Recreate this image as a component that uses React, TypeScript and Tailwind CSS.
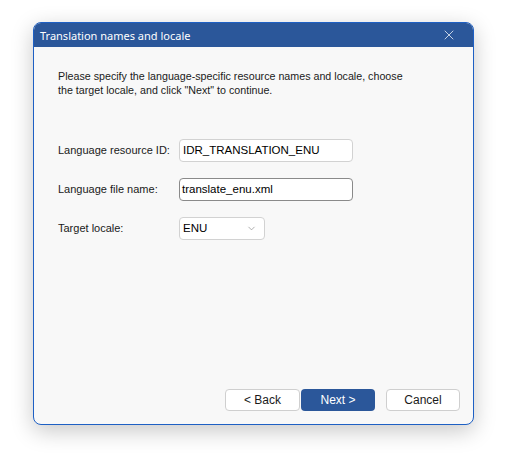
import { ChevronDown, X } from 'lucide-react';

const body = "font-['Liberation_Sans',Arial,sans-serif]";

function Field({ label, value, focused }: { label: string; value: string; focused?: boolean }) {
  return (
    <div className="flex items-center">
      <span className="w-[121px] shrink-0 whitespace-nowrap text-[11px] text-[#1a1a1a]">{label}</span>
      <div
        className={`flex h-[23px] w-[174px] items-center rounded-[4px] border bg-white text-[11.5px] text-black ${
          focused ? 'border-[#8a8a8a] pl-[2px]' : 'border-[#d2d2d2] pl-[3px]'
        }`}
      >
        {value}
      </div>
    </div>
  );
}

export default function App() {
  return (
    <div className={`min-h-screen bg-white pl-[33px] pt-[22px] ${body}`}>
      <div className="flex h-[403px] w-[441px] flex-col overflow-hidden rounded-[8px] border border-[#1e60c4] bg-[#f8f8f8] shadow-[0_6px_22px_rgba(0,0,0,0.22)]">
        {/* title bar */}
        <div className="flex h-[24px] items-center justify-between bg-[#2b579a] pl-[6px] pr-[16px] text-white">
          <span className="font-['Noto_Sans','Open_Sans',sans-serif] text-[11px] leading-none">
            Translation names and locale
          </span>
          <X className="h-[16px] w-[16px]" strokeWidth={1.1} />
        </div>

        <div className="flex flex-1 flex-col pl-[24px] pr-[13px] pt-[22px] pb-[13px]">
          <p className="text-[10.7px] leading-[14px] text-[#1a1a1a]">
            Please specify the language-specific resource names and locale, choose
            <br />
            the target locale, and click &quot;Next&quot; to continue.
          </p>

          <div className="mt-[42px] flex flex-col gap-[16px]">
            <Field label="Language resource ID:" value="IDR_TRANSLATION_ENU" />
            <Field label="Language file name:" value="translate_enu.xml" focused />
            <div className="flex items-center">
              <span className="w-[121px] shrink-0 whitespace-nowrap text-[11px] text-[#1a1a1a]">Target locale:</span>
              <div className="flex h-[23px] w-[86px] items-center justify-between rounded-[4px] border border-[#d2d2d2] bg-white pl-[3px] pr-[7px] text-[11.5px] text-black">
                ENU
                <ChevronDown className="h-[11px] w-[11px] text-[#8a8a8a]" strokeWidth={1.5} />
              </div>
            </div>
          </div>

          <div className="flex-1" />

          <div className="flex justify-end">
            <button className="h-[22px] w-[75px] rounded-[4px] border border-[#cfcfcf] bg-white text-[12px] text-[#1a1a1a]">
              &lt; Back
            </button>
            <button className="ml-[1px] h-[22px] w-[74px] rounded-[4px] bg-[#2b579a] text-[12px] text-white">
              Next &gt;
            </button>
            <button className="ml-[11px] h-[22px] w-[74px] rounded-[4px] border border-[#cfcfcf] bg-white text-[12px] text-[#1a1a1a]">
              Cancel
            </button>
          </div>
        </div>
      </div>
    </div>
  );
}
